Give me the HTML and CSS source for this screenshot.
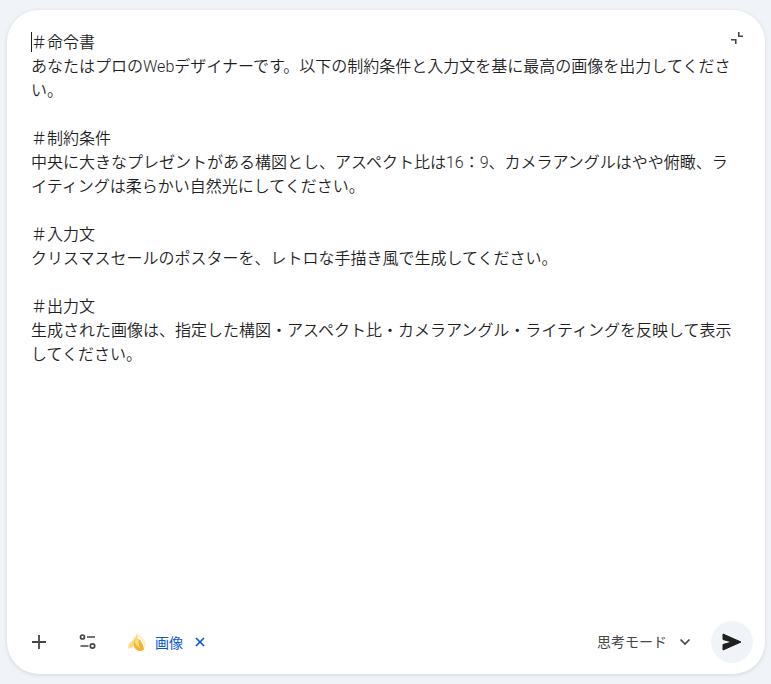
FILE: index.html
```html
<!DOCTYPE html>
<html lang="ja">
<head>
  <meta charset="UTF-8" />
  <title>Gemini</title>
  <link rel="stylesheet" href="styles.css">
</head>
<body>
  <div class="card">
    <button class="collapse" aria-label="collapse">
      <svg width="14" height="14" viewBox="0 0 14 14"><path d="M1 8.75h4.75V13M8.75 1v4.25H13" fill="none" stroke="#444746" stroke-width="1.6"/></svg>
    </button>

    <div class="prompt">
      <p><span class="caret"></span>＃命令書<br>あなたはプロのWebデザイナーです。以下の制約条件と入力文を基に最高の画像を出力してください。</p>
      <p>＃制約条件<br>中央に大きなプレゼントがある構図とし、アスペクト比は16：9、カメラアングルはやや俯瞰、ライティングは柔らかい自然光にしてください。</p>
      <p>＃入力文<br>クリスマスセールのポスターを、レトロな手描き風で生成してください。</p>
      <p>＃出力文<br>生成された画像は、指定した構図・アスペクト比・カメラアングル・ライティングを反映して表示してください。</p>
    </div>

    <div class="toolbar">
      <div class="tools-left">
        <svg class="icon" width="16" height="16" viewBox="0 0 16 16"><path d="M8 1v14M1 8h14" stroke="#444746" stroke-width="1.8"/></svg>
        <svg class="icon" width="18" height="16" viewBox="0 0 18 16"><circle cx="3.5" cy="3" r="2" fill="none" stroke="#444746" stroke-width="1.7"/><path d="M8 3h8M1.5 12h8" stroke="#444746" stroke-width="1.7"/><circle cx="13.5" cy="12" r="2.2" fill="none" stroke="#444746" stroke-width="1.7"/></svg>
        <div class="chip">
          <svg class="banana" width="20" height="20" viewBox="0 0 20 20">
            <path d="M10 1C9 5 6 8 3 11 1.500 12.500 1 15 1.500 16.500 4 16.500 7 14 8.500 11L11 5z" fill="#fed87a"/>
            <path d="M7 10C6 14 8 18 12 19 15 19.500 17 18 17 17 16 13 14.500 9 12 7 10 6 8 8 7 10z" fill="#fbb12b"/>
            <path d="M8 9C8 12 9.500 14.500 13 16 11.500 13 11.500 10 12 7.500 10.500 6.500 9 7.500 8 9z" fill="#ffe08a"/>
            <path d="M10.500 1C11 4 13 6 15 8 17 11 18 15 17.500 18 19 15 19 10 16.500 7 14.500 5 12 3 11 1z" fill="#feeebd"/>
          </svg>
          <span class="chip-label">画像</span>
          <svg width="10" height="10" viewBox="0 0 10 10"><path d="M1 1l8 8M9 1l-8 8" stroke="#0b57d0" stroke-width="1.7"/></svg>
        </div>
      </div>
      <div class="tools-right">
        <span class="mode">思考モード</span>
        <svg class="chevron" width="12" height="8" viewBox="0 0 12 8"><path d="M1.500 1.500L6 6l4.500-4.500" fill="none" stroke="#444746" stroke-width="1.700"/></svg>
        <button class="send" aria-label="send">
          <svg width="20" height="18" viewBox="-1 -1 20 18"><path d="M0 0L18 8 0 16V10.500L9 8 0 5.500z" fill="#1f1f1f" stroke="#1f1f1f" stroke-linejoin="round"/></svg>
        </button>
      </div>
    </div>
  </div>
</body>
</html>
```

FILE: styles.css
```css
html, body {
  height: 100%;
}
body {
  margin: 0;
  background-color: #f0f4f9;
  font-family: Roboto, "Noto Sans CJK JP", sans-serif;
  color: #1f1f1f;
  overflow: hidden;
}
button {
  border: none;
  background: none;
  padding: 0;
  cursor: pointer;
}
.card {
  position: relative;
  box-sizing: border-box;
  width: 758px;
  height: 664px;
  margin: 10px 0 0 7px;
  padding: 21px 24px 0;
  display: flex;
  flex-direction: column;
  background: #ffffff;
  border-radius: 32px;
  box-shadow: 0 1px 4px rgba(0, 0, 0, 0.12);
}
.collapse {
  position: absolute;
  top: 21px;
  right: 21px;
  width: 14px;
  height: 14px;
}
.prompt {
  flex: 1;
  font-size: 16px;
  font-weight: 350;
  line-height: 24px;
  padding-right: 4px;
}
.prompt p {
  margin: 0 0 24px;
}
.caret {
  display: inline-block;
  width: 1px;
  height: 20px;
  margin-right: -1px;
  vertical-align: -4px;
  background: #1f1f1f;
}
.toolbar {
  display: flex;
  align-items: center;
  justify-content: space-between;
  height: 42px;
  margin: 0 -12px 11px 0;
}
.tools-left {
  display: flex;
  align-items: center;
  gap: 32px;
}
.icon {
  display: block;
}
.chip {
  display: flex;
  align-items: center;
  gap: 8px;
  color: #0b57d0;
  font-size: 14px;
}
.banana {
  margin-left: -2px;
}
.chip-label {
  margin-top: -1px;
  margin-right: 4px;
}
.tools-right {
  display: flex;
  align-items: center;
}
.mode {
  margin-top: -2px;
  font-size: 14px;
  color: #444746;
}
.chevron {
  margin: 0 20px 0 12px;
}
.send {
  width: 42px;
  height: 42px;
  border-radius: 50%;
  background: #f0f4f9;
  display: flex;
  align-items: center;
  justify-content: center;
}
```
